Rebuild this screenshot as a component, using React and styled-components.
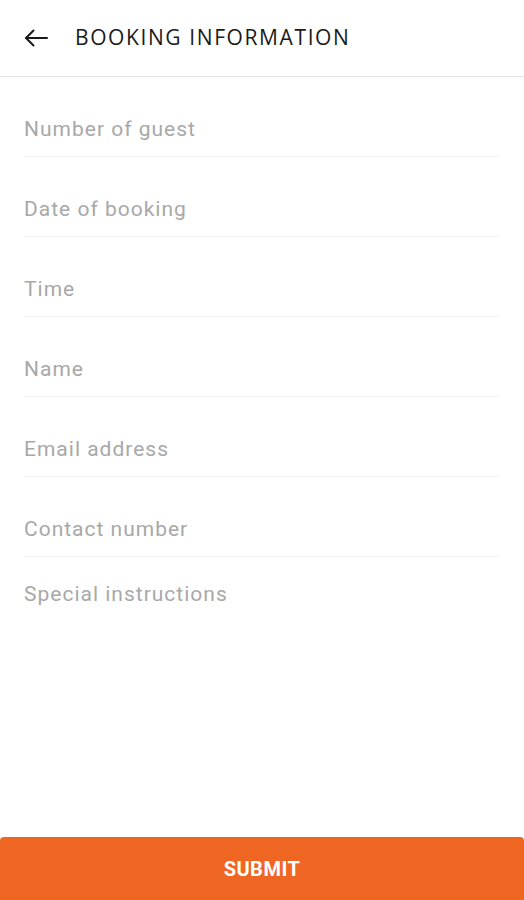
import React from "react"
import styled, { createGlobalStyle } from "styled-components"

const GlobalStyle = createGlobalStyle`
  html, body {
    margin: 0;
    padding: 0;
    background: #fff;
  }
  body {
    font-family: Roboto, "Liberation Sans", sans-serif;
  }
`

const Page = styled.div`
  display: flex;
  flex-direction: column;
  min-height: 100vh;
  background: #fff;
`

const Header = styled.header`
  height: 76px;
  display: flex;
  align-items: center;
  padding: 0 24px;
  gap: 27px;
  border-bottom: 1px solid #e6e6e6;
`

const BackButton = styled.button`
  border: 0;
  background: none;
  padding: 0;
  width: 24px;
  height: 24px;
  display: flex;
  align-items: center;
  justify-content: center;
  color: #1a1a1a;
  cursor: pointer;
`

const Title = styled.h1`
  margin: 0;
  font-family: "Open Sans", sans-serif;
  font-size: 21px;
  font-weight: 500;
  letter-spacing: 1.6px;
  color: #1a1a1a;
  text-transform: uppercase;
  position: relative;
  top: -1px;
`

const Form = styled.form`
  display: flex;
  flex-direction: column;
  padding: 0 24px;
`

const Field = styled.div`
  height: 80px;
  box-sizing: border-box;
  padding-top: ${p => (p.$last ? 24 : 39)}px;
  border-bottom: ${p => (p.$last ? "none" : "1px solid #f3f3f3")};
`

const Input = styled.input`
  width: 100%;
  border: 0;
  outline: none;
  padding: 0;
  background: transparent;
  font-family: Roboto, "Liberation Sans", sans-serif;
  font-size: 21px;
  letter-spacing: 1px;
  line-height: 26px;
  height: 26px;
  color: #333;
  &::placeholder {
    color: #a8a8a8;
  }
`

const Submit = styled.button`
  margin-top: auto;
  height: 63px;
  border: 0;
  border-radius: 4px 4px 0 0;
  background: #ef6623;
  color: #fff;
  font-family: Roboto, "Liberation Sans", sans-serif;
  font-size: 20px;
  font-weight: 700;
  letter-spacing: 0.5px;
  text-transform: uppercase;
  cursor: pointer;
`

const BackArrow = () => (
  <svg width="24" height="24" viewBox="0 0 24 24" fill="none" stroke="currentColor" strokeWidth="2" strokeLinecap="round" strokeLinejoin="round">
    <path d="M23 12H2" />
    <path d="M9.5 4.5L2 12l7.5 7.5" />
  </svg>
)

const fields = [
  "Number of guest",
  "Date of booking",
  "Time",
  "Name",
  "Email address",
  "Contact number",
]

export default function App() {
  return (
    <Page>
      <GlobalStyle />
      <Header>
        <BackButton aria-label="Back">
          <BackArrow />
        </BackButton>
        <Title>Booking Information</Title>
      </Header>
      <Form>
        {fields.map(f => (
          <Field key={f}>
            <Input placeholder={f} />
          </Field>
        ))}
        <Field $last>
          <Input placeholder="Special instructions" />
        </Field>
      </Form>
      <Submit>Submit</Submit>
    </Page>
  )
}
